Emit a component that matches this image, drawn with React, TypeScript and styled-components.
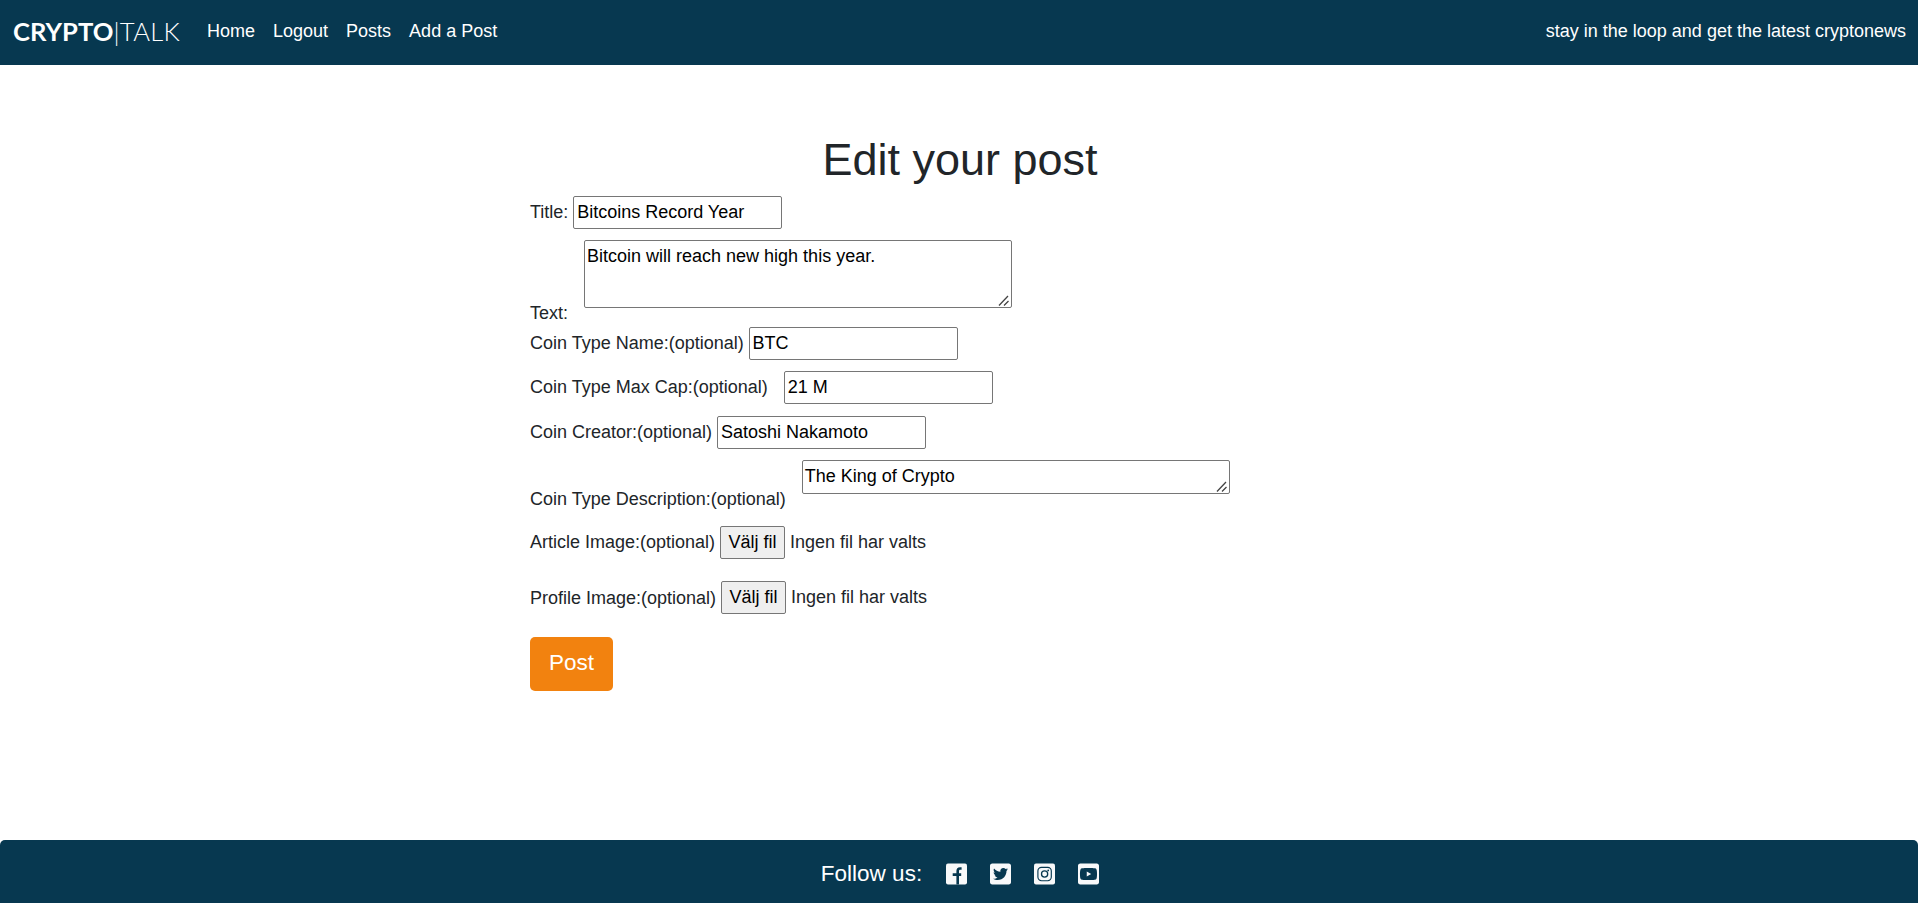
import React from "react";
import styled, { createGlobalStyle } from "styled-components";
import { FaTwitterSquare, FaYoutubeSquare } from "react-icons/fa";

const GlobalStyle = createGlobalStyle`
  *, *::before, *::after { box-sizing: border-box; }
  body {
    margin: 0;
    background: #fff;
    color: #212529;
    font-family: "Liberation Sans", Arial, sans-serif;
    font-size: 18px;
    line-height: 26px;
  }
`;

const Page = styled.div`
  display: flex;
  flex-direction: column;
  height: 903px;
  overflow: hidden;
`;

const Navbar = styled.nav`
  display: flex;
  align-items: center;
  height: 65px;
  flex: none;
  padding: 0 12px 3px 13px;
  background: #073850;
  color: #fff;
`;

const Brand = styled.a`
  width: 194px;
  font-family: Lato, sans-serif;
  font-size: 25.6px;
  font-weight: 700;
  line-height: 40px;
  white-space: nowrap;
`;

const BrandThin = styled.span`
  font-weight: 300;
  letter-spacing: 0.3px;
`;

const NavLinks = styled.div`
  display: flex;
  gap: 18px;
  flex: 1;
`;

const NavLink = styled.a`
  color: #fff;
  white-space: nowrap;
`;

const Tagline = styled.span`
  white-space: nowrap;
`;

const Main = styled.main`
  flex: 1;
  width: 858px;
  margin: 0 auto;
  padding-top: 68px;
`;

const Heading = styled.h1`
  margin: 0;
  height: 63px;
  padding-left: 2px;
  font-size: 45px;
  font-weight: 400;
  line-height: 53px;
  text-align: center;
`;

const Row = styled.div<{ $height: number }>`
  display: flex;
  align-items: flex-start;
  height: ${(p) => p.$height}px;
`;

const Label = styled.label<{ $drop?: number; $gap?: number }>`
  padding-top: ${(p) => p.$drop ?? 3}px;
  margin-right: ${(p) => p.$gap ?? 4.8}px;
  white-space: nowrap;
`;

const TextInput = styled.input`
  width: 209.3px;
  height: 33.4px;
  padding: 1px 3px 2px;
  border: 1px solid #767676;
  border-radius: 2px;
  background: #fff;
  color: #000;
  font: inherit;
  outline: none;
`;

const AreaFrame = styled.div`
  position: relative;
  display: flex;
`;

const AreaInput = styled.textarea<{ $height: number }>`
  width: 428px;
  height: ${(p) => p.$height}px;
  padding: 2px;
  border: 1px solid #767676;
  border-radius: 2px;
  background: #fff;
  color: #000;
  font: inherit;
  overflow: hidden;
  resize: none;
  outline: none;
`;

const Grip = styled.svg`
  position: absolute;
  right: 3px;
  bottom: 2px;
`;

const FileButton = styled.button`
  width: 65px;
  height: 33.4px;
  padding: 0 0 1px;
  margin-right: 5px;
  border: 1px solid #767676;
  border-radius: 2px;
  background: #efefef;
  color: #000;
  font: inherit;
  white-space: nowrap;
`;

const FileStatus = styled.span`
  padding-top: 3px;
`;

const SubmitButton = styled.button`
  display: block;
  width: 83px;
  height: 54px;
  padding: 0 0 2px;
  border: 0;
  border-radius: 5px;
  background: #f2820f;
  color: #fff;
  font-family: inherit;
  font-size: 22.5px;
`;

const Footer = styled.footer`
  display: flex;
  align-items: center;
  justify-content: center;
  flex: none;
  height: 63px;
  padding: 5px 0 0 2px;
  border-radius: 5px 5px 0 0;
  background: #073850;
  color: #fff;
  font-size: 22.5px;
`;

const Social = styled.div`
  display: flex;
  gap: 23px;
  margin-left: 24px;
  padding-bottom: 1px;
  color: #f8f9fa;

  svg {
    display: block;
    width: 21px;
    height: 24px;
  }
`;

function TextArea({ height, value }: { height: number; value: string }) {
  return (
    <AreaFrame>
      <AreaInput $height={height} defaultValue={value} />
      <Grip width="11" height="11" viewBox="0 0 11 11" stroke="#444" strokeWidth="1.3">
        <path d="M1 10.5L10 1M6 10.5L10.5 6" />
      </Grip>
    </AreaFrame>
  );
}

function FacebookIcon() {
  return (
    <svg viewBox="0 0 21 24" fill="none" stroke="#073850" strokeWidth="2.6">
      <rect x="0" y="1.5" width="21" height="21" rx="2" fill="#f8f9fa" stroke="none" />
      <path d="M11.7 22.5V9C11.7 7.2 12.6 6.5 14 6.5H15.6M6.7 12.6H15.2" />
    </svg>
  );
}

function InstagramIcon() {
  return (
    <svg viewBox="0 0 21 24" fill="none" stroke="#073850" strokeWidth="1.15">
      <rect x="0" y="1.5" width="21" height="21" rx="2" fill="#f8f9fa" stroke="none" />
      <rect x="3.9" y="5.3" width="13.4" height="13.4" rx="3.6" />
      <circle cx="10.6" cy="12" r="3.1" strokeWidth="1.3" />
      <circle cx="14.2" cy="8.4" r="0.9" fill="#073850" stroke="none" />
    </svg>
  );
}

export default function App() {
  return (
    <>
      <GlobalStyle />
      <Page>
        <Navbar>
          <Brand>
            CRYPTO<BrandThin>|TALK</BrandThin>
          </Brand>
          <NavLinks>
            <NavLink>Home</NavLink>
            <NavLink>Logout</NavLink>
            <NavLink>Posts</NavLink>
            <NavLink>Add a Post</NavLink>
          </NavLinks>
          <Tagline>stay in the loop and get the latest cryptonews</Tagline>
        </Navbar>

        <Main>
          <Heading>Edit your post</Heading>
          <Row $height={44}>
            <Label>Title:</Label>
            <TextInput defaultValue="Bitcoins Record Year" />
          </Row>
          <Row $height={87}>
            <Label $drop={60} $gap={16}>Text:</Label>
            <TextArea height={68} value="Bitcoin will reach new high this year." />
          </Row>
          <Row $height={44}>
            <Label>Coin Type Name:(optional)</Label>
            <TextInput defaultValue="BTC" />
          </Row>
          <Row $height={45}>
            <Label $gap={16}>Coin Type Max Cap:(optional)</Label>
            <TextInput defaultValue="21 M" />
          </Row>
          <Row $height={44}>
            <Label>Coin Creator:(optional)</Label>
            <TextInput defaultValue="Satoshi Nakamoto" />
          </Row>
          <Row $height={66}>
            <Label $drop={26} $gap={16}>Coin Type Description:(optional)</Label>
            <TextArea height={34} value="The King of Crypto" />
          </Row>
          <Row $height={55}>
            <Label>Article Image:(optional)</Label>
            <FileButton type="button">Välj fil</FileButton>
            <FileStatus>Ingen fil har valts</FileStatus>
          </Row>
          <Row $height={56}>
            <Label $drop={4}>Profile Image:(optional)</Label>
            <FileButton type="button">Välj fil</FileButton>
            <FileStatus>Ingen fil har valts</FileStatus>
          </Row>
          <SubmitButton type="button">Post</SubmitButton>
        </Main>

        <Footer>
          Follow us:
          <Social>
            <FacebookIcon />
            <FaTwitterSquare />
            <InstagramIcon />
            <FaYoutubeSquare />
          </Social>
        </Footer>
      </Page>
    </>
  );
}
